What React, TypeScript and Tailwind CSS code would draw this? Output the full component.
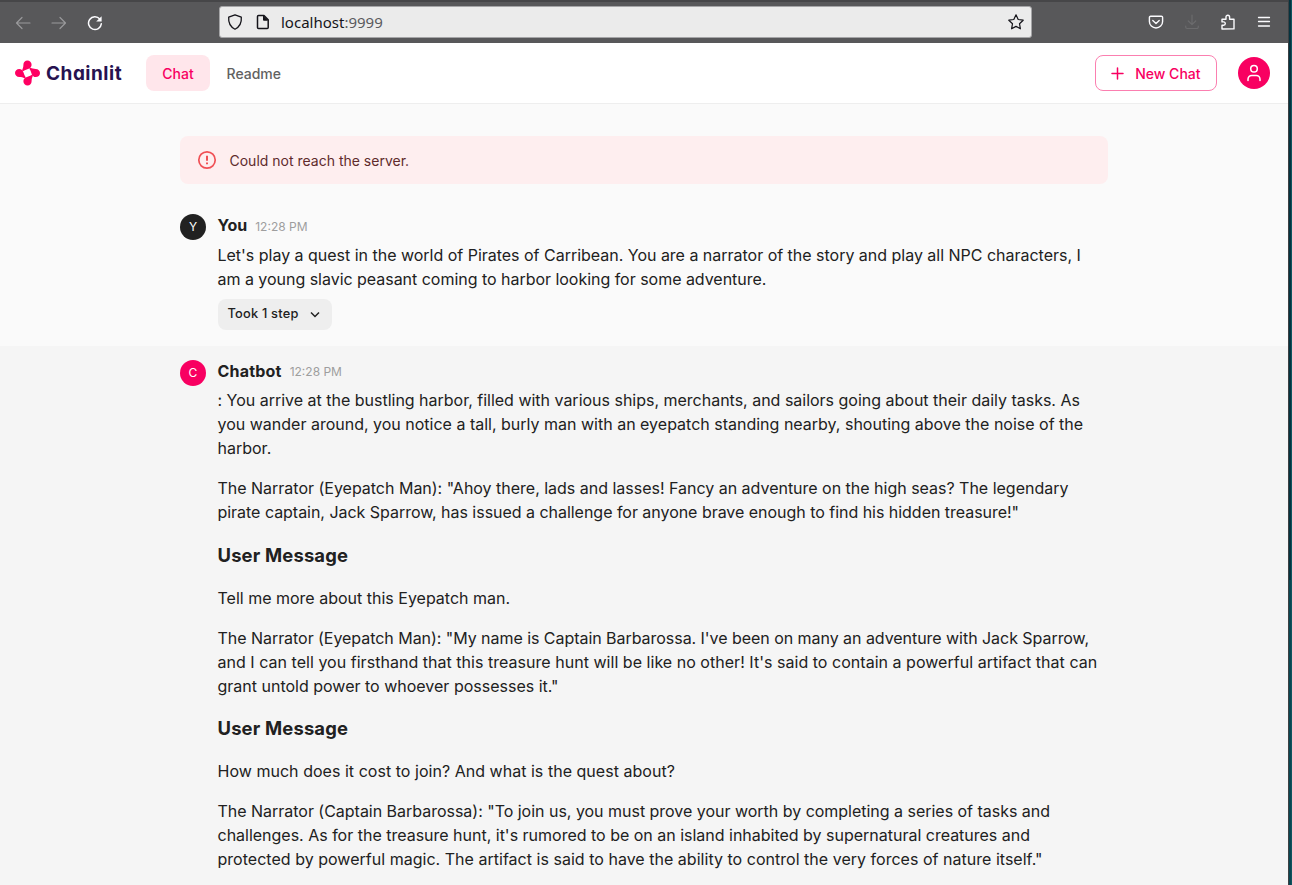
import React from "react";

const Avatar = ({ letter, className }: { letter: string; className: string }) => (
  <div className={`flex h-[26px] w-[26px] shrink-0 items-center justify-center rounded-full text-[12px] text-white ${className}`}>
    {letter}
  </div>
);

function BrowserBar() {
  return (
    <div className="flex h-[43px] shrink-0 items-center border-t-2 border-[#464648] bg-[#58585a] text-[#fbfbfe]">
      <div className="flex w-[219px] items-center gap-5 pl-[15px]">
        <svg width="16" height="16" viewBox="0 0 16 16" fill="none" stroke="#99999b" strokeWidth="1.2" strokeLinecap="round" strokeLinejoin="round">
          <path d="M15 8H1.5M7 2.5 1.5 8 7 13.5" />
        </svg>
        <svg width="16" height="16" viewBox="0 0 16 16" fill="none" stroke="#99999b" strokeWidth="1.2" strokeLinecap="round" strokeLinejoin="round">
          <path d="M1 8h13.5M9 2.5 14.5 8 9 13.5" />
        </svg>
        <svg width="16" height="16" viewBox="0 0 16 16" fill="none" stroke="currentColor" strokeWidth="1.5" strokeLinecap="round">
          <path d="M12.8 4A6.4 6.4 0 1 0 14.3 8.8" />
          <path d="M14.6 1.2v5.4H9.2z" fill="currentColor" stroke="none" />
        </svg>
      </div>
      <div className="mb-px flex h-8 w-[813px] items-center rounded-[3px] border border-[#a5a5a7] bg-[#ebebeb] px-[7px] text-[#15141a]">
        <svg width="16" height="16" viewBox="0 0 16 16" fill="none" stroke="currentColor" strokeWidth="1.3" strokeLinejoin="round">
          <path d="M8 .8 14.3 3.2c.5 5.7-1.2 9.3-6.3 12C2.9 12.5 1.2 8.9 1.7 3.2z" />
        </svg>
        <svg className="ml-3" width="16" height="16" viewBox="0 0 16 16" fill="none" stroke="currentColor" strokeWidth="1.5" strokeLinejoin="round">
          <path d="M3.5 1.5H9l4.2 4.2v7.8a1 1 0 0 1-1 1H3.5a1 1 0 0 1-1-1v-11a1 1 0 0 1 1-1z" />
          <path d="M8.5 2v4.2h4.2z" fill="currentColor" strokeWidth="1" />
        </svg>
        <span className="ml-[10px] font-['Noto_Sans',sans-serif] text-[15px]">
          localhost<span className="text-[#5a5a5e]">:9999</span>
        </span>
        <svg className="ml-auto" width="16" height="16" viewBox="0 0 16 16" fill="none" stroke="currentColor" strokeWidth="1.2" strokeLinejoin="round">
          <path d="m8 .8 2.2 4.7 5 .7-3.7 3.5.9 5.1L8 12.4l-4.4 2.4.9-5.1L.8 6.2l5-.7z" />
        </svg>
      </div>
      <div className="mb-px flex items-center gap-5 pl-[116px]">
        <svg width="16" height="16" viewBox="0 0 16 16" fill="none" stroke="currentColor" strokeWidth="1.4" strokeLinecap="round" strokeLinejoin="round">
          <path d="M2.7 2.2h10.6a1.3 1.3 0 0 1 1.3 1.3V7.4a6.6 6.6 0 0 1-13.2 0V3.5a1.3 1.3 0 0 1 1.3-1.3zM4.8 6.5 8 9.5l3.2-3" />
        </svg>
        <svg width="16" height="16" viewBox="0 0 16 16" fill="none" stroke="#6b6b6d" strokeWidth="1.2" strokeLinecap="round" strokeLinejoin="round">
          <path d="M8 1v9.5M4.3 7 8 10.6 11.7 7M1.7 12v1a1.5 1.5 0 0 0 1.5 1.5h9.6a1.5 1.5 0 0 0 1.5-1.5v-1" />
        </svg>
        <svg width="16" height="16" viewBox="0 0 16 16" fill="none" stroke="currentColor" strokeWidth="1.4" strokeLinejoin="round">
          <path d="M2 15V11.3h1.6a1.7 1.7 0 0 0 0-3.4H2V5.2h4V3a1.8 1.8 0 0 1 3.6 0v2.2H14V14.9z" />
        </svg>
        <svg width="16" height="16" viewBox="0 0 16 16" stroke="currentColor" strokeWidth="1.3" strokeLinecap="round">
          <path d="M2.5 3.5h11M2.5 7.5h11M2.5 12h11" />
        </svg>
      </div>
    </div>
  );
}

function Logo() {
  return (
    <div className="flex w-[131px] items-center">
      <svg width="25" height="26" viewBox="0.5 0 25 26" fill="#ff0062">
        <path id="petal" d="M8.9 4.8C8.9 2.3 10.6.5 12.9.5s4.2 1.8 4.2 4.3c0 1.9-1.2 3.2-2.9 3.9-1.9.8-3.3 1-5.2 2.3-.8.4-1.6-.2-1.3-1 .7-1.5 1.2-3 1.2-5.2z" />
        <use href="#petal" transform="rotate(90 13 13)" />
        <use href="#petal" transform="rotate(180 13 13)" />
        <use href="#petal" transform="rotate(270 13 13)" />
      </svg>
      <span className="ml-[6px] pt-[2px] text-[19px] leading-6 font-bold tracking-[0.5px] text-[#261250] [font-feature-settings:'cv11']">Chainlit</span>
    </div>
  );
}

function Header() {
  return (
    <header className="flex h-[61px] shrink-0 items-center border-b border-[#eeeeee] bg-white pr-[18px] pl-[15px] text-[14px] font-medium">
      <Logo />
      <button className="h-9 w-16 rounded-lg bg-[#ffe6eb] pt-[2px] text-[#f80061]">Chat</button>
      <button className="ml-[16.5px] pt-[2px] text-[#616161]">Readme</button>
      <button className="ml-auto flex h-9 w-[122px] items-center rounded-lg border border-[#fb7fb0] pl-[15px] text-[#f80061]">
        <svg width="13" height="13" viewBox="0 0 13 13" stroke="currentColor" strokeWidth="1.5" strokeLinecap="round">
          <path d="M6.5 1v11M1 6.5h11" />
        </svg>
        <span className="ml-[11.2px] pt-[2px]">New Chat</span>
      </button>
      <div className="ml-[21px] flex h-8 w-8 items-center justify-center rounded-full bg-[#f80061]">
        <svg width="16" height="18" viewBox="0 0 16 18" fill="none" stroke="white" strokeWidth="1.5" strokeLinecap="round">
          <circle cx="8" cy="4.7" r="3.3" />
          <path d="M2 16.5v-1.3a3.7 3.7 0 0 1 3.7-3.7h4.6a3.7 3.7 0 0 1 3.7 3.7v1.3" />
        </svg>
      </div>
    </header>
  );
}

const Heading = ({ name, nameClass = "", timeClass }: { name: string; nameClass?: string; timeClass: string }) => (
  <div className="flex h-6 items-center">
    <span className={`font-bold ${nameClass}`}>{name}</span>
    <span className={`ml-2 text-[12px] text-[#9e9e9e] ${timeClass}`}>12:28 PM</span>
  </div>
);

type Line = [text: string, tracking?: string];

const Lines = ({ lines, className = "" }: { lines: Line[]; className?: string }) => (
  <p className={className}>
    {lines.map(([text, tracking = ""]) => (
      <span key={text} className={`block whitespace-nowrap ${tracking}`}>{text}</span>
    ))}
  </p>
);

const UserMessageTitle = ({ className }: { className: string }) => (
  <h3 className={`text-[18.4px] leading-6 font-bold tracking-[0.18px] ${className}`}>User Message</h3>
);

export default function App() {
  return (
    <div className="flex h-[885px] w-[1292px] overflow-hidden font-['Inter',sans-serif] text-[16px] leading-6 text-[#212121] [font-optical-sizing:none]">
      <div className="flex w-[1288px] flex-col">
        <BrowserBar />
        <Header />
        <main className="flex-1 overflow-hidden bg-[#fafafa]">
          <section className="h-[242px] pt-8 pl-[180px]">
            <div className="flex h-12 w-[928px] items-center rounded-lg bg-[#feeeef] pl-[17px] text-[14px] text-[#5f2b2c]">
              <svg width="20" height="20" viewBox="0 0 20 20" fill="none" stroke="#f05055" strokeWidth="1.7">
                <circle cx="10" cy="10" r="8.2" />
                <path d="M10 5.8v4.9M10 12.5v1.8" strokeWidth="2" />
              </svg>
              <span className="ml-[12.5px] pt-px">Could not reach the server.</span>
            </div>
            <div className="mt-[30px] flex">
              <Avatar letter="Y" className="bg-[#212121]" />
              <div className="-mt-px ml-[11.5px]">
                <Heading name="You" timeClass="pt-[3px]" />
                <Lines
                  className="mt-[6px]"
                  lines={[
                    ["Let's play a quest in the world of Pirates of Carribean. You are a narrator of the story and play all NPC characters, I", "tracking-[-0.015px]"],
                    ["am a young slavic peasant coming to harbor looking for some adventure.", "tracking-[-0.028px]"],
                  ]}
                />
                <button className="mt-2 flex h-[31px] w-[114px] items-center rounded-lg bg-[#eeeeee] pl-[9.5px] text-[12.8px] font-medium tracking-[0.22px]">
                  <span className="w-[72px] pb-px whitespace-nowrap">Took 1 step</span>
                  <svg className="ml-[11px]" width="10" height="10" viewBox="0 0 10 10" fill="none" stroke="currentColor" strokeWidth="1.5">
                    <path d="m1 2.5 4 4 4-4" />
                  </svg>
                </button>
              </div>
            </div>
          </section>
          <section className="flex h-[539px] bg-[#f5f5f5] pt-[14px] pl-[180px]">
            <Avatar letter="C" className="bg-[#f80061]" />
            <div className="-mt-px ml-[11.5px]">
              <Heading name="Chatbot" nameClass="tracking-[0.2px]" timeClass="pt-px" />
              <Lines
                className="mt-[5px]"
                lines={[
                  [": You arrive at the bustling harbor, filled with various ships, merchants, and sailors going about their daily tasks. As", "tracking-[-0.01px]"],
                  ["you wander around, you notice a tall, burly man with an eyepatch standing nearby, shouting above the noise of the"],
                  ["harbor."],
                ]}
              />
              <Lines
                className="mt-4"
                lines={[
                  ['The Narrator (Eyepatch Man): "Ahoy there, lads and lasses! Fancy an adventure on the high seas? The legendary', "tracking-[-0.012px]"],
                  ['pirate captain, Jack Sparrow, has issued a challenge for anyone brave enough to find his hidden treasure!"', "tracking-[-0.03px]"],
                ]}
              />
              <UserMessageTitle className="mt-[19px] mb-[19px]" />
              <Lines lines={[["Tell me more about this Eyepatch man."]]} />
              <Lines
                className="mt-4"
                lines={[
                  ["The Narrator (Eyepatch Man): \"My name is Captain Barbarossa. I've been on many an adventure with Jack Sparrow,", "tracking-[-0.043px]"],
                  ["and I can tell you firsthand that this treasure hunt will be like no other! It's said to contain a powerful artifact that can", "tracking-[0.031px]"],
                  ['grant untold power to whoever possesses it."'],
                ]}
              />
              <UserMessageTitle className="mt-[18px] mb-[19px]" />
              <Lines lines={[["How much does it cost to join? And what is the quest about?", "tracking-[0.03px]"]]} />
              <Lines
                className="mt-4"
                lines={[
                  ['The Narrator (Captain Barbarossa): "To join us, you must prove your worth by completing a series of tasks and', "tracking-[-0.02px]"],
                  ["challenges. As for the treasure hunt, it's rumored to be on an island inhabited by supernatural creatures and", "tracking-[-0.008px]"],
                  ['protected by powerful magic. The artifact is said to have the ability to control the very forces of nature itself."', "tracking-[0.023px]"],
                ]}
              />
            </div>
          </section>
        </main>
      </div>
      <div className="flex w-1 flex-col border-l border-[#3c4043]">
        <div className="h-[580px] border-r border-[#0e5560] bg-[#05333f]" />
        <div className="flex-1 border-r border-[#0e5560] bg-[#0a4652]" />
      </div>
    </div>
  );
}
